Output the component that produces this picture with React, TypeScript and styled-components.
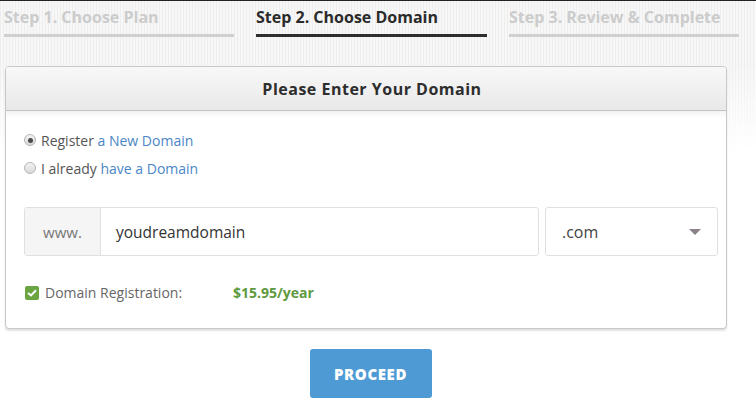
import React from "react";
import styled, { createGlobalStyle } from "styled-components";

const Global = createGlobalStyle`
  html, body { margin: 0; padding: 0; background: #fff; }
  body { font-family: "Open Sans", "Liberation Sans", sans-serif; }
  * { box-sizing: border-box; }
`;

const Page = styled.div`
  width: 756px;
  height: 407px;
  overflow: hidden;
  border-top: 1px solid #222;
  background:
    linear-gradient(to bottom, rgba(255,255,255,0) 0px, rgba(255,255,255,0) 60px, #fff 150px),
    repeating-linear-gradient(90deg, #eeeeee 0px, #eeeeee 1px, #f7f7f7 1px, #f7f7f7 3px);
`;

const Steps = styled.div`
  display: grid;
  grid-template-columns: 230px 231px 230px;
  column-gap: 22px;
  padding-left: 4px;
`;

const Step = styled.div<{ $active?: boolean }>`
  font-family: "Open Sans", sans-serif;
  font-weight: 700;
  font-size: 16px;
  line-height: 22px;
  padding-top: 5px;
  padding-bottom: 6px;
  color: ${(p) => (p.$active ? "#2b2b2b" : "#cccccc")};
  border-bottom: ${(p) => (p.$active ? "3px solid #2e2e2e" : "3px solid #d0d0d0")};
  white-space: nowrap;
`;

const Card = styled.div`
  margin: 29px 0 0 5px;
  width: 722px;
  border: 1px solid #c8c8c8;
  border-radius: 4px;
  background: #fff;
  box-shadow: 0 2px 2px rgba(0,0,0,0.12);
  overflow: hidden;
`;

const CardHeader = styled.div`
  height: 44px;
  display: flex;
  align-items: center;
  justify-content: center;
  padding-left: 12px;
  background: linear-gradient(to bottom, #f8f8f8, #e9e9e9);
  border-bottom: 1px solid #c4c4c4;
  font-family: "Open Sans", sans-serif;
  font-weight: 700;
  font-size: 16px;
  letter-spacing: 0.5px;
  color: #2d2d2d;
  position: relative;
  &::after {
    content: "";
    position: absolute;
    left: 0; right: 0; bottom: -8px;
    height: 7px;
    background: linear-gradient(to bottom, rgba(0,0,0,0.05), rgba(0,0,0,0));
  }
`;

const CardBody = styled.div`
  padding: 15px 8px 26px 18px;
`;

const RadioRow = styled.label`
  display: flex;
  align-items: center;
  gap: 5px;
  height: 28px;
  font-size: 14px;
  color: #555;
`;

const Radio = styled.span<{ $checked?: boolean }>`
  width: 12px;
  height: 12px;
  border-radius: 50%;
  border: 1px solid #b5b5b5;
  background: linear-gradient(to bottom, #f4f4f4, #d8d8d8);
  display: flex;
  align-items: center;
  justify-content: center;
  &::after {
    content: "";
    width: 5px;
    height: 5px;
    border-radius: 50%;
    background: ${(p) => (p.$checked ? "#4a4a4a" : "transparent")};
  }
`;

const Link = styled.span`
  color: #4a86c6;
`;

const DomainRow = styled.div`
  display: flex;
  gap: 6px;
  margin-top: 25px;
`;

const InputGroup = styled.div`
  display: flex;
  width: 515px;
  height: 49px;
  border: 1px solid #e0e0e0;
  border-radius: 3px;
  overflow: hidden;
`;

const Addon = styled.div`
  width: 76px;
  background: #f5f5f5;
  border-right: 1px solid #e0e0e0;
  display: flex;
  align-items: center;
  justify-content: center;
  font-size: 15px;
  color: #777;
`;

const Input = styled.div`
  flex: 1;
  display: flex;
  align-items: center;
  padding-left: 15px;
  font-size: 15.5px;
  color: #333;
`;

const Select = styled.div`
  width: 173px;
  height: 49px;
  border: 1px solid #e0e0e0;
  border-radius: 3px;
  display: flex;
  align-items: center;
  justify-content: space-between;
  padding: 0 16px 0 16px;
  font-size: 16px;
  color: #444;
`;

const Caret = styled.span`
  width: 0;
  height: 0;
  border-left: 6px solid transparent;
  border-right: 6px solid transparent;
  border-top: 6px solid #8a8288;
`;

const RegRow = styled.div`
  display: flex;
  align-items: center;
  margin-top: 27px;
  font-size: 14px;
  color: #666;
`;

const Check = styled.span`
  width: 14px;
  height: 14px;
  border-radius: 2px;
  background: #6aa541;
  display: flex;
  align-items: center;
  justify-content: center;
  margin: 0 6px 0 1px;
`;

const RegLabel = styled.span`
  width: 188px;
`;

const Price = styled.span`
  font-weight: 700;
  color: #5e9a40;
`;

const ButtonRow = styled.div`
  display: flex;
  justify-content: center;
  padding-top: 20px;
`;

const Button = styled.button`
  width: 122px;
  height: 49px;
  margin-left: -15px;
  border: none;
  border-radius: 3px;
  background: #4d9ad4;
  color: #fff;
  font-family: "Open Sans", sans-serif;
  font-weight: 800;
  font-size: 15px;
  letter-spacing: 0.6px;
`;

export default function App() {
  return (
    <Page>
      <Global />
      <Steps>
        <Step>Step 1. Choose Plan</Step>
        <Step $active>Step 2. Choose Domain</Step>
        <Step>Step 3. Review &amp; Complete</Step>
      </Steps>
      <Card>
        <CardHeader>Please Enter Your Domain</CardHeader>
        <CardBody>
          <RadioRow>
            <Radio $checked />
            <span>
              Register <Link>a New Domain</Link>
            </span>
          </RadioRow>
          <RadioRow>
            <Radio />
            <span>
              I already <Link>have a Domain</Link>
            </span>
          </RadioRow>
          <DomainRow>
            <InputGroup>
              <Addon>www.</Addon>
              <Input>youdreamdomain</Input>
            </InputGroup>
            <Select>
              <span>.com</span>
              <Caret />
            </Select>
          </DomainRow>
          <RegRow>
            <Check>
              <svg width="10" height="8" viewBox="0 0 10 8">
                <path d="M1 4 L4 6.5 L9 1.2" stroke="#fff" strokeWidth="2" fill="none" />
              </svg>
            </Check>
            <RegLabel>Domain Registration:</RegLabel>
            <Price>$15.95/year</Price>
          </RegRow>
        </CardBody>
      </Card>
      <ButtonRow>
        <Button>PROCEED</Button>
      </ButtonRow>
    </Page>
  );
}
